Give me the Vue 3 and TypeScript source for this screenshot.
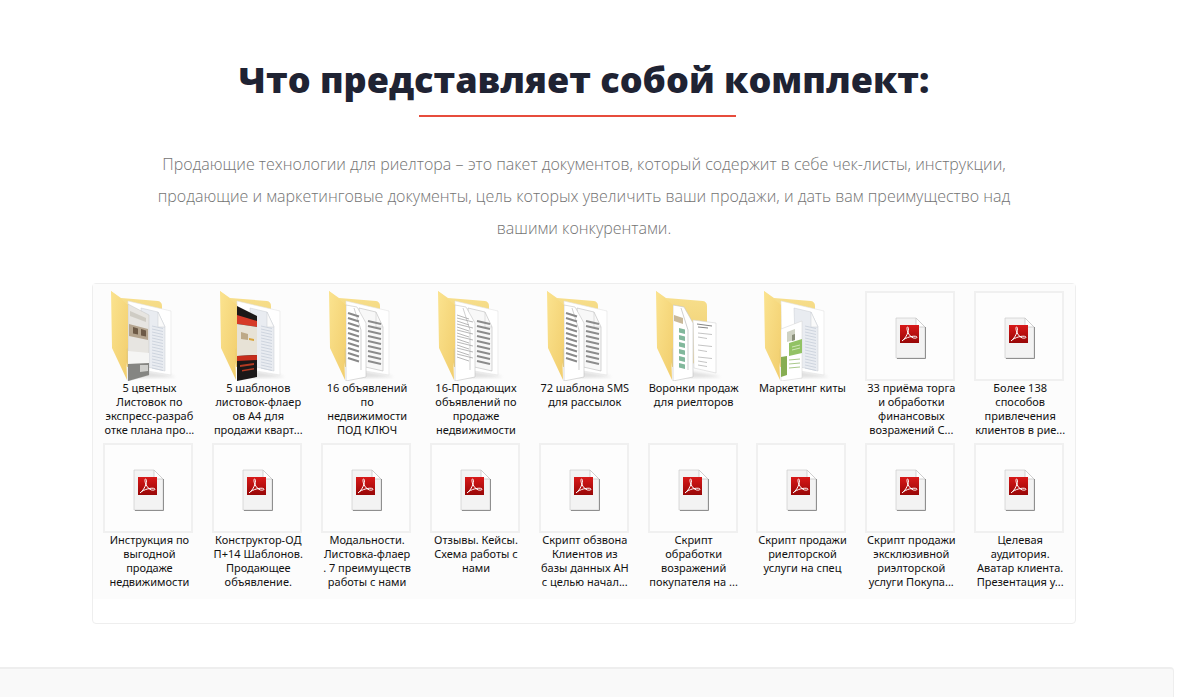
<script setup lang="ts">
type Kind = 'pdf' | 'leaflet' | 'dark' | 'lines' | 'text' | 'funnel' | 'green'

interface Item {
  kind: Kind
  lines: string[]
}

const items: Item[] = [
  { kind: 'leaflet', lines: ['5 цветных', 'Листовок по', 'экспресс-разраб', 'отке плана про...'] },
  { kind: 'dark', lines: ['5 шаблонов', 'листовок-флаер', 'ов А4 для', 'продажи кварт...'] },
  { kind: 'lines', lines: ['16 объявлений', 'по', 'недвижимости', 'ПОД КЛЮЧ'] },
  { kind: 'text', lines: ['16-Продающих', 'объявлений по', 'продаже', 'недвижимости'] },
  { kind: 'lines', lines: ['72 шаблона SMS', 'для рассылок'] },
  { kind: 'funnel', lines: ['Воронки продаж', 'для риелторов'] },
  { kind: 'green', lines: ['Маркетинг киты'] },
  { kind: 'pdf', lines: ['33 приёма торга', 'и обработки', 'финансовых', 'возражений С...'] },
  { kind: 'pdf', lines: ['Более 138', 'способов', 'привлечения', 'клиентов в рие...'] },
  { kind: 'pdf', lines: ['Инструкция по', 'выгодной', 'продаже', 'недвижимости'] },
  { kind: 'pdf', lines: ['Конструктор-ОД', 'П+14 Шаблонов.', 'Продающее', 'объявление.'] },
  { kind: 'pdf', lines: ['Модальности.', 'Листовка-флаер', '. 7 преимуществ', 'работы с нами'] },
  { kind: 'pdf', lines: ['Отзывы. Кейсы.', 'Схема работы с', 'нами'] },
  { kind: 'pdf', lines: ['Скрипт обзвона', 'Клиентов из', 'базы данных АН', 'с целью начал...'] },
  { kind: 'pdf', lines: ['Скрипт', 'обработки', 'возражений', 'покупателя на ...'] },
  { kind: 'pdf', lines: ['Скрипт продажи', 'риелторской', 'услуги на спец'] },
  { kind: 'pdf', lines: ['Скрипт продажи', 'эксклюзивной', 'риэлторской', 'услуги Покупа...'] },
  { kind: 'pdf', lines: ['Целевая', 'аудитория.', 'Аватар клиента.', 'Презентация у...'] },
]

// y positions of the stripes on the folder papers
const stripes = [29, 34, 39, 44, 49, 54, 59, 64, 69]
const frontStripes = [22, 27, 32, 37, 42, 47, 52, 57, 62, 67]
const thinLines = [28, 31, 34, 37, 40, 43, 46, 49, 52, 55, 58, 61, 64, 67, 70]
const cells = [37, 44, 51, 58, 65, 72]
const docLines = [36, 40, 48, 53, 60, 64, 68]
</script>

<template>
  <div class="page">
    <h1 class="title">Что представляет собой комплект:</h1>
    <div class="rule"></div>
    <p class="lead">
      Продающие технологии для риелтора – это пакет документов, который содержит в себе чек-листы, инструкции,
      продающие и маркетинговые документы, цель которых увеличить ваши продажи, и дать вам преимущество над
      вашими конкурентами.
    </p>

    <div class="panel">
      <div class="grid">
        <div v-for="(item, i) in items" :key="i" class="item">
          <!-- PDF file -->
          <div v-if="item.kind === 'pdf'" class="thumb">
            <svg width="86" height="86" viewBox="2 2 86 86">
              <path d="M31 27h20l9 9v31H31z" fill="#f3f3f3" stroke="#d0d0d0" stroke-width=".8" />
              <path d="M60.500 36v31.500H32" fill="none" stroke="#8f8f8f" />
              <path d="M51 27v9h9z" fill="#fff" stroke="#c8c8c8" stroke-width=".8" />
              <rect x="35" y="34" width="19" height="18" fill="url(#pdfRed)" />
              <path
                d="M37 50c3-2 5-6 6-9 .6-2 .7-5-.3-5-1.200 0-.8 3 .1 5 1.200 3 3.500 5.500 5.700 6 1.500.3 3.500.2 3.500-.8s-2.500-1.200-5-.8c-3 .5-6 1.600-8.500 3.200"
                fill="none"
                stroke="#fff"
                stroke-width="1"
              />
            </svg>
          </div>

          <!-- Folder with papers -->
          <div v-else class="folder">
            <svg width="90" height="90" viewBox="0 0 90 90">
              <!-- folder back -->
              <path d="M8 0l10 7 37 3q4 .8 4 5v55l-35 6z" fill="url(#folderBack)" />

              <!-- soft shadow under the papers -->
              <path d="M30 78l40 7 2 1-36 1z" fill="#aaa" opacity=".35" filter="url(#soft)" />

              <!-- back page -->
              <path v-if="item.kind !== 'funnel'" d="M25 10l43 10v64l-42-7z" fill="#fff" stroke="#e3e3e3" stroke-width=".6" />

              <!-- second sheet -->
              <g v-if="item.kind === 'funnel'">
                <path d="M45 29l23 3v50l-22-5z" fill="#fff" stroke="#d5d5d5" stroke-width=".6" />
                <path d="M49 33l15 2M50 36l10 1" stroke="#666" stroke-width=".8" />
                <path
                  v-for="l in docLines"
                  :key="l"
                  :d="`M50 ${l + 6}l${l % 3 === 0 ? 14 : 9} 1.500`"
                  stroke="#aaa"
                  stroke-width=".7"
                />
              </g>
              <g v-else-if="item.kind === 'lines' || item.kind === 'text'">
                <path d="M38 17l17 4 7 15v44l-22-5z" fill="#f8f8f8" stroke="#bbb" stroke-width=".6" />
                <path d="M55 21v15h7" fill="none" stroke="#ccc" stroke-width=".6" />
                <path
                  v-for="s in stripes"
                  :key="s"
                  :d="`M47 ${s + 1}l13 3`"
                  stroke="#8c8c8c"
                  stroke-width="1.800"
                />
              </g>
              <g v-else>
                <path d="M38 17l17 4 7 15v44l-22-5z" fill="#e9ecf1" stroke="#c9ccd2" stroke-width=".5" />
                <path d="M55 21v15h7z" fill="#fafafa" stroke="#c9ccd2" stroke-width=".5" />
                <path
                  v-for="s in thinLines"
                  :key="s"
                  :d="`M49 ${s + 7}l11 2.500`"
                  stroke="#c7ced9"
                  stroke-width=".8"
                />
              </g>

              <!-- front sheet -->
              <template v-if="item.kind === 'leaflet'">
                <path d="M25 13l21 11v60l-21 6z" fill="#e7e5e1" stroke="#bbb" stroke-width=".4" />
                <path d="M27 20l16 7v4l-16-6z" fill="#c9c5bd" opacity=".8" />
                <path d="M26 33l19 5v11l-19-4z" fill="#b5a58f" />
                <path d="M30 36l5 1.500v6l-5-1zM38 38l5 1.500v6l-5-1z" fill="#6d5a46" />
                <path d="M25 60l21 2v10l-21 1z" fill="#f5f5f4" />
                <path d="M25 73l21-1v12l-21 6z" fill="#858582" />
                <path d="M37 74h8v6l-8 1z" fill="#cfcfcc" />
              </template>
              <template v-else-if="item.kind === 'dark'">
                <path d="M25 15l20 10v61l-20 4z" fill="#1c1818" />
                <path d="M25 24l20 6v6l-20-3z" fill="#d63a28" />
                <path d="M25 33l20 3v28l-20 1z" fill="#e7e2d6" />
                <path d="M29 41l7 2v6l-7-1z" fill="#bda988" />
                <path d="M37 47l5 1v2l-5-1z" fill="#d9a53b" />
                <path d="M25 65l20-1v5l-20 1z" fill="#c72d1b" />
                <path d="M28 74l14-2v2l-14 2zM30 79l12-2v1.500l-12 2z" fill="#b33a22" />
              </template>
              <template v-else-if="item.kind === 'green'">
                <path d="M25 38l21-8v57l-21 3z" fill="#fff" stroke="#d0d0d0" stroke-width=".5" />
                <path d="M31 41l8-3v11l-8 2z" fill="#cfd3c4" />
                <path d="M36 44l3-1v6l-3 1z" fill="#8a8f7a" />
                <path d="M33 52l13-4v14l-13 3z" fill="#92c264" />
                <path d="M36 56l8-2M36 59l8-2" stroke="#dff0cd" stroke-width=".8" />
                <path d="M25 66l6-1v19l-6 2z" fill="#86ad52" />
                <path d="M33 69l11-1M33 73l11-1M33 77l11-1" stroke="#a9c98a" stroke-width="1" />
              </template>
              <template v-else>
                <path d="M25 14l11 2 9 16v54l-20 4z" fill="#fff" stroke="#c4c4c4" stroke-width=".6" />
                <path d="M33 17l7 22v40" fill="none" stroke="#bbb" stroke-width=".7" />
                <template v-if="item.kind === 'funnel'">
                  <path d="M26 24l9 3v6l-9-3z" fill="#c9b99a" />
                  <g v-for="c in cells" :key="c">
                    <path :d="`M31 ${c}l6 1.500v4.500l-6-1.500z`" fill="#82b89c" />
                  </g>
                </template>
                <template v-else-if="item.kind === 'text'">
                  <path
                    v-for="s in thinLines"
                    :key="s"
                    :d="`M27 ${s - 4}l${s % 2 ? 16 : 12} 4`"
                    stroke="#9a9a9a"
                    stroke-width=".7"
                  />
                </template>
                <template v-else>
                  <path
                    v-for="s in frontStripes"
                    :key="s"
                    :d="`M27 ${s}l11 3.500`"
                    stroke="#8a8a8a"
                    stroke-width="1.900"
                  />
                </template>
              </template>

              <!-- front flap -->
              <path d="M8 0l17 14v43l-2 1 1 31L9 57z" fill="url(#folderFront)" />
            </svg>
          </div>

          <div class="label">
            <div v-for="line in item.lines" :key="line">{{ line }}</div>
          </div>
        </div>
      </div>
    </div>

    <div class="next-panel"></div>

    <!-- shared gradients -->
    <svg class="defs" width="0" height="0">
      <defs>
        <linearGradient id="folderBack" x1="0" y1="0" x2="0" y2="1">
          <stop offset="0" stop-color="#f8e08e" />
          <stop offset="1" stop-color="#ecca6a" />
        </linearGradient>
        <linearGradient id="folderFront" x1="0" y1="0" x2="1" y2="1">
          <stop offset="0" stop-color="#fbe38f" />
          <stop offset="1" stop-color="#f1cd6c" />
        </linearGradient>
        <linearGradient id="pdfRed" x1="0" y1="0" x2="0" y2="1">
          <stop offset="0" stop-color="#d81818" />
          <stop offset="1" stop-color="#980707" />
        </linearGradient>
        <filter id="soft">
          <feGaussianBlur stdDeviation="1.500" />
        </filter>
      </defs>
    </svg>
  </div>
</template>

<style scoped>
.page {
  width: 1168px;
  padding-top: 53px;
  font-family: "Open Sans", sans-serif;
}

.title {
  margin: 0;
  font-size: 36px;
  line-height: 54px;
  font-weight: 800;
  color: #1f2333;
  text-align: center;
}

.rule {
  width: 317px;
  height: 2px;
  margin: 8px 0 0 419px;
  background: #e74c3c;
}

.lead {
  width: 880px;
  margin: 31px auto 0;
  font-size: 16px;
  line-height: 32px;
  font-weight: 300;
  color: #737373;
  text-align: center;
}

.panel {
  width: 984px;
  margin: 39px auto 0;
  padding-bottom: 24px;
  box-sizing: border-box;
  border: 1px solid #eee;
  border-radius: 4px;
  background: #fff;
}

.grid {
  display: grid;
  grid-template-columns: repeat(9, 108.85px);
  grid-auto-rows: 146px;
  row-gap: 6px;
  padding: 7px 0 10px 1px;
  background: #fcfcfc;
}

.item {
  display: flex;
  flex-direction: column;
  align-items: center;
}

.thumb {
  width: 86px;
  height: 86px;
  border: 2px solid #f0f0f0;
  background: #fdfdfd;
}

.folder {
  width: 90px;
  height: 90px;
}

.thumb svg,
.folder svg {
  display: block;
}

.label {
  width: 108px;
  padding-left: 2px;
  font-family: "Noto Sans", sans-serif;
  font-size: 11px;
  line-height: 14px;
  color: #111;
  text-align: center;
  white-space: nowrap;
}

.next-panel {
  height: 60px;
  margin: 43px -6px 0;
  border: 1px solid #eee;
  border-top-width: 2px;
  border-radius: 4px;
  background: #f9f9f9;
}

.defs {
  position: absolute;
}
</style>

<style>
html,
body {
  overflow: hidden;
  background: #fff;
}
</style>
